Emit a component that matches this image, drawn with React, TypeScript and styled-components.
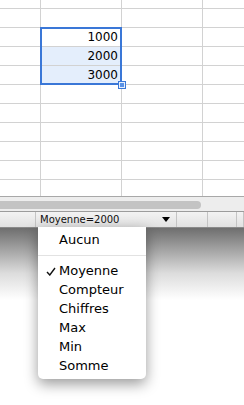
import styled, { createGlobalStyle } from "styled-components";

const GlobalStyle = createGlobalStyle`
    html, body {
        margin: 0;
        padding: 0;
        background: #fff;
        overflow: hidden;
    }
`;

const Window = styled.div`
    position: relative;
    width: 244px;
    height: 405px;
    display: flex;
    flex-direction: column;
    background: #fff;
    font-family: "DejaVu Sans", sans-serif;
`;

const Sheet = styled.div`
    display: grid;
    grid-template-columns: 41px 81px 81px 41px;
    grid-template-rows: 9px repeat(9, 19px) 16px;
`;

const Cell = styled.div<{ $row: number; $col: number; $fill?: boolean; $last?: boolean; $edge?: boolean }>`
    grid-row: ${(p) => p.$row};
    grid-column: ${(p) => p.$col};
    box-sizing: border-box;
    border-right: ${(p) => (p.$edge ? "none" : "1px solid #d2d2d2")};
    border-bottom: ${(p) => (p.$last ? "none" : "1px solid #d2d2d2")};
    background: ${(p) => (p.$fill ? "#e4eefc" : "#fff")};
    font-size: 12px;
    line-height: 18px;
    text-align: right;
    padding-right: 3px;
    color: #000;
`;

const Selection = styled.div`
    grid-column: 2;
    grid-row: 3 / span 3;
    margin: -1px 0 0 -1px;
    position: relative;
    box-sizing: border-box;
    border: 2px solid #3a77d7;
    z-index: 1;
`;

const FillHandle = styled.div`
    position: absolute;
    right: -5px;
    bottom: -5px;
    width: 6px;
    height: 6px;
    box-sizing: border-box;
    background: #5a92e6;
    border: 1px solid #e8f0fc;
    outline: 1px solid #3a77d7;
`;

const ScrollArea = styled.div`
    height: 14px;
    border-top: 1px solid #a8a8a8;
    border-bottom: 1px solid #9c9c9c;
    background: #ededed;
    display: flex;
    align-items: center;
`;

const ScrollThumb = styled.div`
    width: 201px;
    height: 8px;
    margin-top: 2px;
    border-radius: 0 4px 4px 0;
    background: #c3c3c3;
`;

const StatusBar = styled.div`
    height: 15px;
    display: flex;
    background: linear-gradient(#f3f3f3, #e1e1e1);
    border-bottom: 1px solid #8a8a8a;
`;

const StatusCell = styled.div<{ $w: number }>`
    width: ${(p) => p.$w}px;
    flex: none;
    box-sizing: border-box;
    border-right: 1px solid #c4c4c4;
`;

const StatusPopup = styled.div`
    width: 141px;
    flex: none;
    box-sizing: border-box;
    border-right: 1px solid #c4c4c4;
    display: flex;
    align-items: center;
    justify-content: space-between;
    padding: 0 6px 0 4px;
    font-size: 10px;
    color: #111;
    line-height: 15px;
`;

const Arrow = styled.div`
    width: 0;
    height: 0;
    border-left: 4px solid transparent;
    border-right: 4px solid transparent;
    border-top: 5px solid #000;
`;

const Backdrop = styled.div`
    flex: 1;
    background: linear-gradient(#6e6e6e 0, #9a9a9a 18px, #dcdcdc 45px, #fff 72px);
`;

const Menu = styled.ul`
    position: absolute;
    left: 38px;
    top: 227px;
    width: 108px;
    margin: 0;
    padding: 3px 0 4px;
    list-style: none;
    background: #fff;
    border-radius: 0 0 5px 5px;
    box-shadow: 0 5px 14px rgba(0, 0, 0, 0.4);
    z-index: 2;
`;

const MenuItem = styled.li`
    position: relative;
    height: 19px;
    line-height: 19px;
    padding-left: 21px;
    font-size: 13px;
    color: #000;
`;

const Separator = styled.li`
    height: 12px;
    display: flex;
    align-items: center;
    &::after {
        content: "";
        flex: 1;
        height: 1px;
        background: #e2e2e2;
    }
`;

const Check = styled.svg`
    position: absolute;
    left: 8px;
    top: 6px;
`;

const values: Record<number, string> = { 3: "1000", 4: "2000", 5: "3000" };
const sums = ["Moyenne", "Compteur", "Chiffres", "Max", "Min", "Somme"];

function App() {
    const rows = Array.from({ length: 11 }, (_, i) => i + 1);
    const cols = [1, 2, 3, 4];

    return (
        <Window>
            <GlobalStyle />
            <Sheet>
                {rows.map((r) =>
                    cols.map((c) => (
                        <Cell
                            key={`${r}-${c}`}
                            $row={r}
                            $col={c}
                            $last={r === 11}
                            $edge={c === 4}
                            $fill={c === 2 && (r === 4 || r === 5)}
                        >
                            {c === 2 ? values[r] : null}
                        </Cell>
                    ))
                )}
                <Selection>
                    <FillHandle />
                </Selection>
            </Sheet>
            <ScrollArea>
                <ScrollThumb />
            </ScrollArea>
            <StatusBar>
                <StatusCell $w={36} />
                <StatusPopup>
                    <span>Moyenne=2000</span>
                    <Arrow />
                </StatusPopup>
                <StatusCell $w={31} />
                <StatusCell $w={29} />
                <StatusCell $w={7} />
            </StatusBar>
            <Backdrop />
            <Menu>
                <MenuItem>Aucun</MenuItem>
                <Separator />
                {sums.map((s) => (
                    <MenuItem key={s}>
                        {s === "Moyenne" && (
                            <Check width="10" height="9" viewBox="0 0 10 9">
                                <path d="M1 5 L3.8 8 L9 1" fill="none" stroke="#111" strokeWidth="1.4" />
                            </Check>
                        )}
                        {s}
                    </MenuItem>
                ))}
            </Menu>
        </Window>
    );
}

export default App;
